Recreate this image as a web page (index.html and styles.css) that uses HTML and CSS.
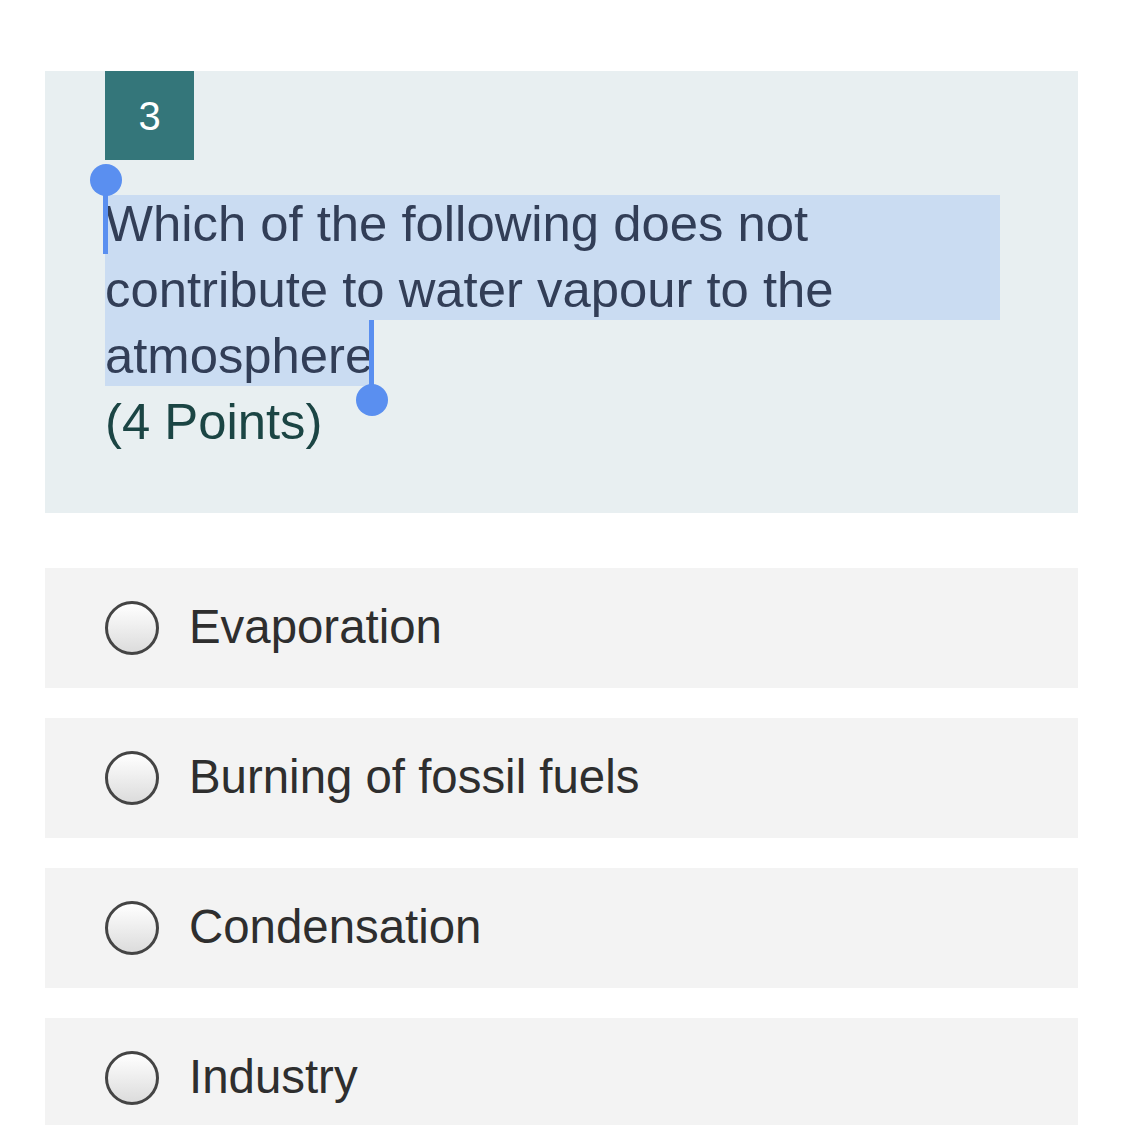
FILE: index.html
```html
<!DOCTYPE html>
<html lang="en">
<head>
<meta charset="utf-8">
<title>Question 3</title>
<link rel="stylesheet" href="styles.css">
</head>
<body>
<main class="page">
  <section class="question-card">
    <div class="badge">3</div>
    <div class="q-text">
      <span class="handle handle-start"></span>
      Which of the following does not contribute to water vapour to the atmosphere
      <span class="handle handle-end"></span>
    </div>
    <div class="points">(4 Points)</div>
  </section>
  <ul class="options">
    <li class="option"><span class="radio"></span><span class="label">Evaporation</span></li>
    <li class="option"><span class="radio"></span><span class="label">Burning of fossil fuels</span></li>
    <li class="option"><span class="radio"></span><span class="label">Condensation</span></li>
    <li class="option"><span class="radio"></span><span class="label">Industry</span></li>
  </ul>
</main>
</body>
</html>
```
FILE: styles.css
```css
html, body {
  margin: 0;
  padding: 0;
  background: #ffffff;
}

body {
  font-family: "Liberation Sans", Arial, sans-serif;
  overflow: hidden;
  height: 1125px;
}

.page {
  padding: 71px 44px 0 45px;
}

.question-card {
  background: #e8eff1;
  padding: 0 60px 58px 60px;
  display: flex;
  flex-direction: column;
  align-items: flex-start;
}

.badge {
  width: 89px;
  height: 89px;
  background: #34767a;
  color: #ffffff;
  font-size: 40px;
  display: flex;
  align-items: center;
  justify-content: center;
  padding-top: 2px;
  box-sizing: border-box;
}

.q-text {
  position: relative;
  margin-top: 31px;
  width: 895px;
  font-size: 50.8px;
  line-height: 66px;
  color: #323e57;
  background:
    linear-gradient(#cadcf2, #cadcf2) 0 4px / 100% 125px no-repeat,
    linear-gradient(#cadcf2, #cadcf2) 0 129px / 266px 66px no-repeat;
}

.handle {
  position: absolute;
  width: 5px;
  background: #5a8ff0;
}

.handle::after {
  content: "";
  position: absolute;
  width: 32px;
  height: 32px;
  border-radius: 50%;
  background: #5a8ff0;
  left: -13px;
}

.handle-start {
  left: -2px;
  top: -12px;
  height: 75px;
}

.handle-start::after {
  top: -15px;
}

.handle-end {
  left: 264px;
  top: 129px;
  height: 80px;
}

.handle-end::after {
  bottom: -16px;
}

.points {
  font-size: 50.8px;
  line-height: 66px;
  color: #1b4544;
}

.options {
  list-style: none;
  margin: 55px 0 0 0;
  padding: 0;
  display: flex;
  flex-direction: column;
  gap: 30px;
}

.option {
  height: 120px;
  background: #f3f3f3;
  display: flex;
  align-items: center;
  padding-left: 60px;
  gap: 30px;
}

.radio {
  width: 48px;
  height: 48px;
  border: 3px solid #444444;
  border-radius: 50%;
  background: linear-gradient(#ffffff, #dcdcdc);
  flex: none;
}

.label {
  font-size: 47.4px;
  color: #2e2e2e;
  margin-top: -3px;
}
```
